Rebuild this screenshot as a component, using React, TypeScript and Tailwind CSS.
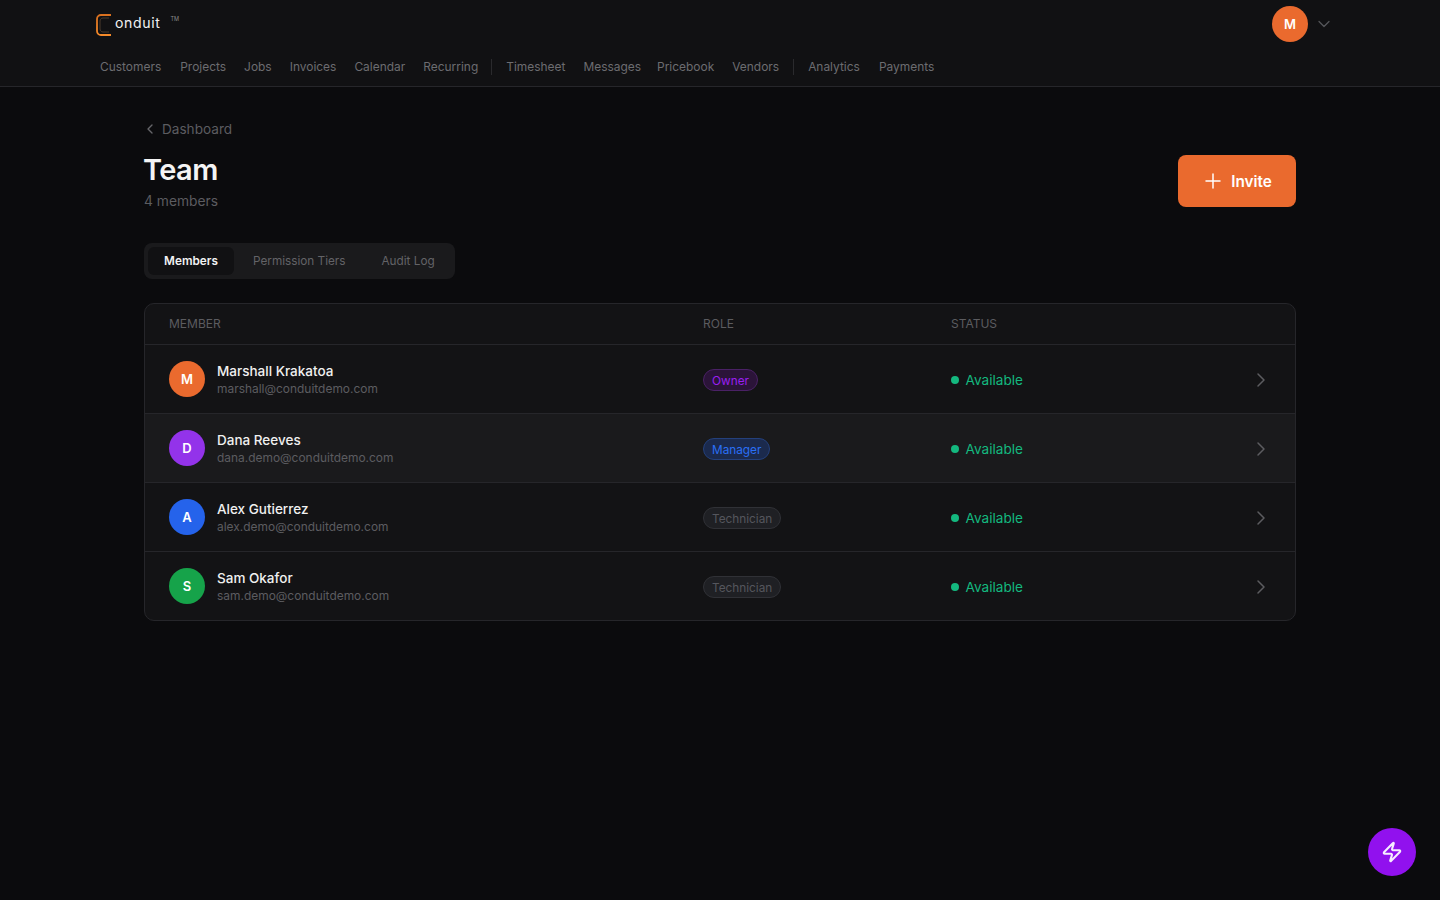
import React from "react";
import { ChevronLeft, ChevronRight, ChevronDown, Plus, Zap } from "lucide-react";

const navGroups = [
  [
    { n: "Customers", c: "mr-[1px]" },
    { n: "Projects", c: "" },
    { n: "Jobs", c: "" },
    { n: "Invoices", c: "" },
    { n: "Calendar", c: "" },
    { n: "Recurring", c: "mr-[-1px]" },
  ],
  [
    { n: "Timesheet", c: "" },
    { n: "Messages", c: "mr-[-2px]" },
    { n: "Pricebook", c: "" },
    { n: "Vendors", c: "" },
  ],
  [
    { n: "Analytics", c: "mr-[1px]" },
    { n: "Payments", c: "" },
  ],
];

const members = [
  { i: "M", name: "Marshall Krakatoa", email: "marshall@conduitdemo.com", role: "Owner", av: "bg-[#ea6a2e]", badge: "bg-[#2b1439] border-[#4a2165] text-[#9a1ff0]", row: "h-[69px] border-b border-[#26262a]" },
  { i: "D", name: "Dana Reeves", email: "dana.demo@conduitdemo.com", role: "Manager", av: "bg-[#9333ea]", badge: "bg-[#1b2a4d] border-[#24407c] text-[#2a6ff5]", row: "h-[69px] border-b border-[#26262a] bg-[#1a1a1c]" },
  { i: "A", name: "Alex Gutierrez", email: "alex.demo@conduitdemo.com", role: "Technician", av: "bg-[#2563eb]", badge: "bg-[#1f2024] border-[#303136] text-[#55565d]", row: "h-[69px] border-b border-[#26262a]" },
  { i: "S", name: "Sam Okafor", email: "sam.demo@conduitdemo.com", role: "Technician", av: "bg-[#16a34a]", badge: "bg-[#1f2024] border-[#303136] text-[#55565d]", row: "h-[68px]" },
];

export default function App() {
  return (
    <div className="min-h-[900px] bg-[#0b0b0d] font-['Inter',sans-serif] text-white">
      <header className="h-[87px] border-b border-[#26262a] bg-[#111113]">
        <div className="mx-auto w-[1248px]">
          <div className="flex h-[48px] items-center justify-between">
            <div className="flex items-start">
              <svg width="16" height="22" viewBox="0 0 16 22" fill="none" className="mt-[1px]">
                <defs>
                  <linearGradient id="logoStroke" x1="0" y1="0" x2="0" y2="1">
                    <stop offset="0" stopColor="#d9701f" />
                    <stop offset="1" stopColor="#f58a2a" />
                  </linearGradient>
                </defs>
                <path d="M15 1H5C2.8 1 1 2.8 1 5V17C1 19.2 2.8 21 5 21H15" stroke="url(#logoStroke)" strokeWidth="1.8" />
                <path d="M13 4H7C5.3 4 4 5.3 4 7V15C4 16.7 5.3 18 7 18H13" stroke="#4b3a2c" strokeWidth="1" />
              </svg>
              <span className="ml-[3px] mt-[1px] text-[14.1px] leading-[18px] font-normal tracking-[0.6px] text-[#f2f2f2]">onduit</span>
              <span className="ml-[10px] mt-0 text-[5.5px] leading-[12px] text-[#8a8a8a]">TM</span>
            </div>
            <div className="mr-[10px] flex items-center gap-[6px]">
              <div className="flex h-9 w-9 items-center justify-center rounded-full bg-[#ea6a2e] pt-[1px] text-[13px] font-semibold">M</div>
              <ChevronDown size={20} strokeWidth={1.5} className="text-[#55565a]" />
            </div>
          </div>
          <nav className="flex h-[38px] items-center pl-[4px] text-[11.95px] text-[#6c6c70]">
            {navGroups.map((g, gi) => (
              <React.Fragment key={gi}>
                {gi > 0 && <div className="mx-[14px] h-4 w-px bg-[#2a2a2d]" />}
                <div className="flex items-center gap-[18px]">
                  {g.map((item) => (
                    <span key={item.n} className={item.c}>{item.n}</span>
                  ))}
                </div>
              </React.Fragment>
            ))}
          </nav>
        </div>
      </header>

      <main className="mx-auto w-[1152px] pt-[31px]">
        <div className="flex h-[22px] items-center gap-[4px] text-[13.6px] text-[#5c5c60]">
          <ChevronLeft size={16} strokeWidth={2} className="ml-[-2px] text-[#66666a]" />
          <span>Dashboard</span>
        </div>
        <div className="mt-[2px] flex items-start justify-between">
          <div>
            <h1 className="ml-[-1px] mt-[10px] text-[29px] leading-[36px] font-semibold tracking-[-0.6px] text-[#f4f4f4]">Team</h1>
            <p className="mt-[3px] text-[13.8px] leading-[20px] text-[#5c5c60]">4 members</p>
          </div>
          <button className="mt-[13px] flex h-[52px] w-[118px] items-center justify-center gap-[6px] rounded-lg bg-[#ea6a2e] pr-[1px] text-[15.3px] font-semibold text-white">
            <Plus size={24} strokeWidth={1.5} />
            <span className="pt-[2px]">Invite</span>
          </button>
        </div>

        <div className="mt-[32px] flex h-[36px] w-[311px] items-center rounded-lg bg-[#1a1a1c] px-[4px] text-[11.75px]">
          <div className="flex h-[28px] w-[86px] items-center justify-center rounded-md bg-[#111113] pt-[2px] font-semibold text-[#f2f2f2]">Members</div>
          <div className="ml-[19px] pt-[2px] text-[#636367]">Permission Tiers</div>
          <div className="ml-[36px] pt-[2px] text-[#636367]">Audit Log</div>
        </div>

        <div className="mt-[24px] overflow-hidden rounded-[10px] border border-[#26262a] bg-[#131315]">
          <div className="grid h-[41px] grid-cols-[534px_248px_1fr] items-center border-b border-[#26262a] px-[24px] text-[12px] text-[#5c5c60]">
            <div>MEMBER</div>
            <div>ROLE</div>
            <div>STATUS</div>
          </div>
          {members.map((m) => (
            <div key={m.name} className={`grid grid-cols-[534px_248px_1fr] items-center px-[24px] ${m.row}`}>
              <div className="flex items-center gap-[12px]">
                <div className={`flex h-9 w-9 items-center justify-center rounded-full pt-[1px] text-[13px] font-semibold ${m.av}`}>{m.i}</div>
                <div className="pt-[1px]">
                  <div className="text-[13.5px] leading-[18px] font-medium text-[#f0f0f0]">{m.name}</div>
                  <div className="mt-[1px] text-[11.95px] leading-[16px] text-[#5c5c60]">{m.email}</div>
                </div>
              </div>
              <div>
                <span className={`inline-flex h-[22px] items-center rounded-full border px-[8px] pt-[2px] text-[11.8px] ${m.badge}`}>{m.role}</span>
              </div>
              <div className="flex items-center justify-between pt-[2px]">
                <div className="flex items-center gap-[6.5px] text-[13.6px] text-[#14b87f]">
                  <span className="h-2 w-2 rounded-full bg-[#14b87f]" />
                  Available
                </div>
                <ChevronRight size={24} strokeWidth={1.5} className="mr-[-2px] text-[#5c5c60]" />
              </div>
            </div>
          ))}
        </div>
      </main>

      <button className="fixed bottom-[24px] right-[24px] flex h-12 w-12 items-center justify-center rounded-full bg-[#9111ee]">
        <Zap size={22} strokeWidth={2.25} className="text-[#f6ecff]" />
      </button>
    </div>
  );
}
